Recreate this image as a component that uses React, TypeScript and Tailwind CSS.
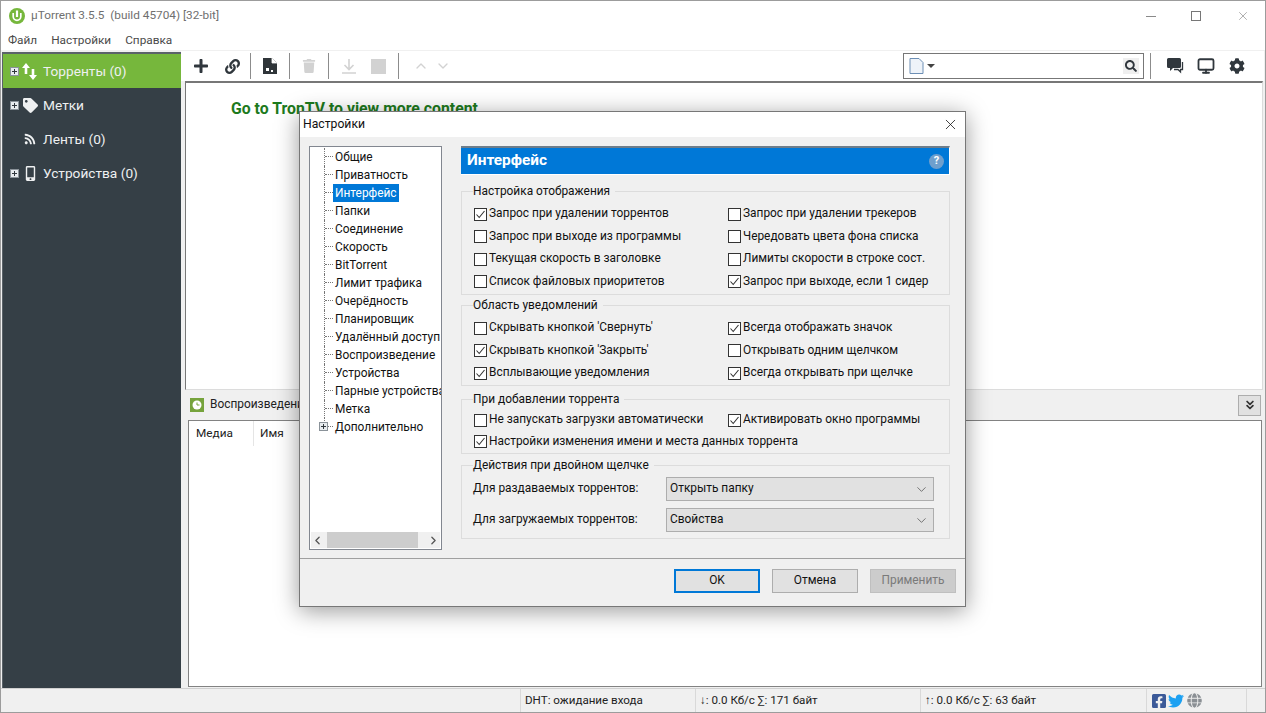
import { ChevronDown, ChevronLeft, ChevronRight, ChevronUp, ChevronsDown, Monitor, X } from "lucide-react";
import { FaCog, FaFacebookSquare, FaGlobe, FaLink, FaMobileAlt, FaPlus, FaRss, FaSearch, FaTag, FaTrash, FaTwitter } from "react-icons/fa";

const TREE = ["Общие", "Приватность", "Интерфейс", "Папки", "Соединение", "Скорость", "BitTorrent", "Лимит трафика", "Очерёдность", "Планировщик", "Удалённый доступ", "Воспроизведение", "Устройства", "Парные устройства", "Метка", "Дополнительно"];

const DISPLAY: [string, boolean][] = [
    ["Запрос при удалении торрентов", true],
    ["Запрос при удалении трекеров", false],
    ["Запрос при выходе из программы", false],
    ["Чередовать цвета фона списка", false],
    ["Текущая скорость в заголовке", false],
    ["Лимиты скорости в строке сост.", false],
    ["Список файловых приоритетов", false],
    ["Запрос при выходе, если 1 сидер", true],
];

const TRAY: [string, boolean][] = [
    ["Скрывать кнопкой 'Свернуть'", false],
    ["Всегда отображать значок", true],
    ["Скрывать кнопкой 'Закрыть'", true],
    ["Открывать одним щелчком", false],
    ["Всплывающие уведомления", true],
    ["Всегда открывать при щелчке", true],
];

const ADDING: [string, boolean][] = [
    ["Не запускать загрузки автоматически", false],
    ["Активировать окно программы", true],
];

function Logo() {
    return (
        <svg width="16" height="16" viewBox="0 0 16 16">
            <circle cx="8" cy="8" r="8" fill="#76b73c" />
            <path d="M4.2 5v3.5a3.8 3.8 0 0 0 7.6 0V5" fill="none" stroke="#fff" strokeWidth="1.7" />
            <path d="M8 2.5V9" fill="none" stroke="#fff" strokeWidth="2.2" />
        </svg>
    );
}

function FileIcon() {
    return (
        <svg width="15" height="16" viewBox="0 0 15 16">
            <path d="M0 0h9l5 5v11H0z" fill="#2f3539" />
            <path d="M9 0v5h5" fill="#fff" stroke="#fff" strokeWidth="0.8" />
            <rect x="3" y="10" width="3" height="3" fill="#fff" />
            <rect x="8" y="12" width="2" height="2" fill="#fff" />
        </svg>
    );
}

function ChatIcon() {
    return (
        <svg width="17" height="16" viewBox="0 0 17 16">
            <path d="M1.5 0h11A1.5 1.5 0 0 1 14 1.500v7A1.500 1.500 0 0 1 12.500 10H6l-3 3v-3H1.500A1.500 1.500 0 0 1 0 8.500v-7A1.500 1.500 0 0 1 1.500 0z" fill="#30373d" />
            <path d="M15.500 4v7.500h-2v2.500l-2.500-2.500H7" fill="none" stroke="#30373d" strokeWidth="1.300" />
        </svg>
    );
}

function TransferIcon() {
    return (
        <svg width="16" height="17" viewBox="0 0 16 17" fill="#fff">
            <path d="M4 0 8 5H5.300v6H2.700V5H0z" />
            <path d="M11 17 7 12h2.700V6h2.600v6H15z" />
        </svg>
    );
}

function Sep({ className = "" }: { className?: string }) {
    return <div className={`w-px h-[26px] bg-[#8c8c8c] ${className}`} />;
}

function Expander() {
    return (
        <span className="w-[9px] h-[9px] bg-[#e8ecef] border border-[#8a9299] flex items-center justify-center relative">
            <span className="absolute w-[5px] h-px bg-[#30373d]" />
            <span className="absolute w-px h-[5px] bg-[#30373d]" />
        </span>
    );
}

function SideRow({ label, icon, active, expand = true }: { label: string; icon: React.ReactNode; active?: boolean; expand?: boolean }) {
    return (
        <div className={`h-[34px] flex items-center pl-[7px] text-[13.7px] text-[#eef0f1] ${active ? "bg-[#76b73c]" : ""}`}>
            <span className="w-[9px] flex">{expand && <Expander />}</span>
            <span className="w-[24px] -ml-[1px] flex items-center justify-center">{icon}</span>
            <span className="ml-[1px]">{label}</span>
        </div>
    );
}

function Check({ label, checked, className = "" }: { label: string; checked: boolean; className?: string }) {
    return (
        <div className={`flex items-center h-[22.5px] ${className}`}>
            <span className="w-[13px] h-[13px] bg-white border border-[#333] flex items-center justify-center shrink-0">
                {checked && (
                    <svg width="11" height="11" viewBox="0 0 11 11">
                        <path d="M1.5 5.5 4.2 8.5 9.5 2" fill="none" stroke="#333" strokeWidth="1.1" />
                    </svg>
                )}
            </span>
            <span className="ml-[2px] whitespace-nowrap">{label}</span>
        </div>
    );
}

function Group({ title, className, children }: { title: string; className: string; children: React.ReactNode }) {
    return (
        <fieldset className={`border border-[#dcdcdc] pl-[12px] w-[489px] ${className}`}>
            <legend className="-ml-[1px] pr-[5px] leading-[14px]">{title}</legend>
            {children}
        </fieldset>
    );
}

function FakeSelect({ value }: { value: string }) {
    return (
        <div className="w-[268px] h-[24px] bg-[#e1e1e1] border border-[#adadad] flex items-center justify-between pl-[3px] pr-[4px]">
            <span>{value}</span>
            <ChevronDown size={15} strokeWidth={1} color="#333" />
        </div>
    );
}

function Dialog() {
    return (
        <div className="absolute left-[298px] top-[110px] w-[667px] h-[496px] bg-[#f0f0f0] border border-[#777] shadow-[0_4px_22px_rgba(0,0,0,0.4)] flex flex-col text-[11.9px] text-[#111]">
            <div className="h-[25px] bg-white flex items-center justify-between pl-[3px] pr-[6px] shrink-0">
                <span className="text-[12.2px]">Настройки</span>
                <X size={17} strokeWidth={1.1} color="#111" />
            </div>
            <div className="flex-1 flex pl-[9px] pt-[9px]">
                <div className="w-[133px] h-[404px] bg-white border border-[#828790] flex flex-col relative">
                    <div className="flex-1 pt-[1px] overflow-hidden pl-[14px]">
                        {TREE.map((item, i) => (
                            <div key={item} className="h-[18px] flex items-center relative whitespace-nowrap">
                                <div className={`w-[9px] h-[18px] shrink-0 ${i === TREE.length - 1 ? "" : "border-l border-dotted border-[#777]"}`}>
                                    <div className={`h-[9px] border-b border-dotted border-[#777] ${i === TREE.length - 1 ? "border-l" : ""}`} />
                                </div>
                                <span className={`px-[2px] h-[18px] leading-[18px] ${item === "Интерфейс" ? "bg-[#0078d7] text-white" : ""}`}>{item}</span>
                                {i === TREE.length - 1 && (
                                    <span className="absolute left-[-5px] top-[4px]">
                                        <Expander />
                                    </span>
                                )}
                            </div>
                        ))}
                    </div>
                    <div className="h-[16px] mx-[1px] mb-[1px] bg-[#f0f0f0] flex items-center justify-between shrink-0">
                        <ChevronLeft size={13} strokeWidth={2.4} color="#555" />
                        <div className="w-[91px] h-[16px] bg-[#cdcdcd] -ml-[1px] mr-[5px]" />
                        <ChevronRight size={13} strokeWidth={2.4} color="#555" />
                    </div>
                </div>
                <div className="ml-[19px] flex flex-col">
                    <div className="w-[489px] h-[29px] bg-[#0078d7] border-t-2 border-[#6e7d8a] border-r border-b border-r-white border-b-white flex items-center justify-between pl-[6px] pr-[5px] mb-[9px]">
                        <span className="text-white font-bold text-[15.400px]">Интерфейс</span>
                        <span className="w-[15px] h-[15px] rounded-full bg-[#6f9fcd] text-white text-[11px] font-bold flex items-center justify-center">?</span>
                    </div>
                    <Group title="Настройка отображения" className="h-[111px] mb-[3px]">
                        <div className="grid grid-cols-[254px_1fr] pt-[5px]">
                            {DISPLAY.map(([label, on]) => (
                                <Check key={label} label={label} checked={on} />
                            ))}
                        </div>
                    </Group>
                    <Group title="Область уведомлений" className="h-[88px] mb-[6px]">
                        <div className="grid grid-cols-[254px_1fr] pt-[5px]">
                            {TRAY.map(([label, on]) => (
                                <Check key={label} label={label} checked={on} />
                            ))}
                        </div>
                    </Group>
                    <Group title="При добавлении торрента" className="h-[62px] mb-[4px]">
                        <div className="grid grid-cols-[254px_1fr] pt-[3px]">
                            {ADDING.map(([label, on]) => (
                                <Check key={label} label={label} checked={on} />
                            ))}
                            <Check className="col-span-2 -mt-[1px]" label="Настройки изменения имени и места данных торрента" checked={true} />
                        </div>
                    </Group>
                    <Group title="Действия при двойном щелчке" className="h-[81px]">
                        <div className="flex items-center justify-between pr-[15px] pt-[5px]">
                            <span className="-ml-[1px]">Для раздаваемых торрентов:</span>
                            <FakeSelect value="Открыть папку" />
                        </div>
                        <div className="flex items-center justify-between pr-[15px] pt-[7px]">
                            <span className="-ml-[1px]">Для загружаемых торрентов:</span>
                            <FakeSelect value="Свойства" />
                        </div>
                    </Group>
                </div>
            </div>
            <div className="h-px bg-[#a0a0a0] shrink-0" />
            <div className="h-[47px] flex justify-end items-start gap-[12px] pt-[10px] pr-[9px] shrink-0">
                <button className="w-[86px] h-[24px] bg-[#e1e1e1] border-2 border-[#0078d7]">OK</button>
                <button className="w-[86px] h-[24px] bg-[#e1e1e1] border border-[#adadad]">Отмена</button>
                <button className="w-[86px] h-[24px] bg-[#cccccc] border border-[#bfbfbf] text-[#7a7a7a]">Применить</button>
            </div>
        </div>
    );
}

export default function App() {
    return (
        <div className="relative w-[1266px] h-[713px] bg-white border border-[#9c9c9c] overflow-hidden flex flex-col font-['Roboto','Noto_Sans',sans-serif] text-[11.8px] text-[#222]">
            {/* Title + menu */}
            <div className="h-[30px] flex items-center pl-[8px] shrink-0 text-[#6f6f6f]">
                <Logo />
                <span className="ml-[6px] whitespace-pre">µTorrent 3.5.5  (build 45704) [32-bit]</span>
                <div className="ml-auto flex items-center text-[#777]">
                    <div className="w-[10px] h-px bg-[#8a8a8a] mr-[35px]" />
                    <div className="w-[10px] h-[10px] border border-[#777] mr-[35px]" />
                    <X size={14} strokeWidth={1} className="mr-[15px]" />
                </div>
            </div>
            <div className="h-[19px] flex items-center gap-[14px] pl-[7px] shrink-0 text-[#4a4a4a]">
                <span>Файл</span>
                <span>Настройки</span>
                <span>Справка</span>
            </div>
            <div className="flex-1 flex bg-[#f0f0f0] pt-[2px] pl-[1px] pr-[1px] min-h-0">
                {/* Sidebar */}
                <div className="w-[179px] bg-[#353f46] border-t-2 border-l border-[#5a6268] shrink-0 h-[636px]">
                    <SideRow active label="Торренты (0)" icon={<TransferIcon />} />
                    <SideRow label="Метки" icon={<FaTag size={15} />} />
                    <SideRow expand={false} label="Ленты (0)" icon={<FaRss size={12} />} />
                    <SideRow label="Устройства (0)" icon={<FaMobileAlt size={15} />} />
                </div>
                <div className="flex-1 flex flex-col min-w-0 pl-[4px]">
                    {/* Toolbar */}
                    <div className="h-[30px] bg-white flex items-center -ml-[4px] shrink-0 -mt-[1px] pl-[3px]">
                        <div className="w-[25px] ml-[4px] flex justify-center"><FaPlus size={16} color="#30373d" /></div>
                        <div className="w-[31px] ml-[4px] flex justify-center"><FaLink size={15} color="#30373d" /></div>
                        <Sep className="ml-[2px]" />
                        <div className="w-[38px] flex justify-center"><FileIcon /></div>
                        <Sep />
                        <div className="w-[38px] flex justify-center"><FaTrash size={14} color="#d2d2d2" /></div>
                        <Sep />
                        <div className="w-[40px] flex justify-center">
                            <svg width="16" height="16" viewBox="0 0 16 16" fill="none" stroke="#d2d2d2" strokeWidth="1.6">
                                <path d="M8 1v10M3.5 7 8 11.5 12.5 7M1 15h14" />
                            </svg>
                        </div>
                        <div className="w-[15px] h-[15px] bg-[#d2d2d2] ml-[2px]" />
                        <div className="w-[12px]" />
                        <Sep />
                        <ChevronUp size={16} strokeWidth={2} color="#d2d2d2" className="ml-[14px]" />
                        <ChevronDown size={16} strokeWidth={2} color="#d2d2d2" className="ml-[6px]" />
                        <div className="ml-auto w-[241px] h-[26px] border border-[#777] flex items-center pl-[5px] pr-[4px]">
                            <svg width="15" height="16" viewBox="0 0 15 16">
                                <path d="M1 .5h9l4 4v11H1z" fill="#eef3f9" stroke="#6d8fb5" />
                            </svg>
                            <span className="w-0 h-0 border-x-[4px] border-x-transparent border-t-[4px] border-t-[#444] ml-[3px]" />
                            <span className="ml-auto w-[16px] h-[16px] bg-[#efefef] flex items-center justify-center"><FaSearch size={12} color="#30373d" /></span>
                        </div>
                        <Sep className="ml-[6px]" />
                        <div className="w-[30px] ml-[9px] flex justify-center"><ChatIcon /></div>
                        <div className="w-[32px] flex justify-center"><Monitor size={18} strokeWidth={2.4} color="#30373d" /></div>
                        <div className="w-[30px] mr-[12px] flex justify-center"><FaCog size={16} color="#30373d" /></div>
                    </div>
                    {/* Top pane */}
                    <div className="h-[309px] bg-white border-t-2 border-l border-[#777] border-r border-r-[#dcdcdc] border-b border-b-[#dcdcdc] shrink-0 pl-[45px] pt-[14px] mr-[1px]">
                        <span className="text-[#1d7a1d] font-bold text-[15.800px]">Go to TronTV to view more content</span>
                    </div>
                    {/* Bottom tabs */}
                    <div className="h-[30px] flex items-center pl-[5px] pr-[3px] shrink-0">
                        <svg width="14" height="14" viewBox="0 0 14 14">
                            <rect width="14" height="14" fill="#76a33c" />
                            <circle cx="7" cy="7" r="4.5" fill="#fff" />
                            <path d="M7 4.5V7h2.5" stroke="#76a33c" fill="none" />
                        </svg>
                        <span className="ml-[6px] text-[11.900px]">Воспроизведение</span>
                        <span className="ml-auto w-[23px] h-[21px] bg-[#e1e1e1] border border-[#adadad] flex items-center justify-center">
                            <ChevronsDown size={14} strokeWidth={3} color="#333" />
                        </span>
                    </div>
                    <div className="h-[267px] ml-[3px] mr-[2px] bg-white border border-[#828282] shrink-0">
                        <div className="flex h-[25px] items-center">
                            <span className="w-[65px] pl-[7px] border-r border-[#e5e5e5] h-full flex items-center">Медиа</span>
                            <span className="pl-[6px]">Имя</span>
                        </div>
                    </div>
                </div>
            </div>
            {/* Status bar */}
            <div className="absolute left-0 right-0 bottom-0 h-[24px] bg-[#f0f0f0] border-t border-[#d0d0d0] flex items-center text-[11.600px] text-[#222]">
                <div className="w-[519px]" />
                <div className="w-[175px] h-full border-l border-[#d9d9d9] pl-[4px] flex items-center">DHT: ожидание входа</div>
                <div className="w-[225px] h-full border-l border-[#d9d9d9] pl-[4px] flex items-center">↓: 0.0 Кб/с ∑: 171 байт</div>
                <div className="w-[226px] h-full border-l border-[#d9d9d9] pl-[4px] flex items-center">↑: 0.0 Кб/с ∑: 63 байт</div>
                <div className="w-[101px] h-full border-l border-r border-[#d9d9d9] pl-[4px] flex items-center gap-[1px]">
                    <FaFacebookSquare size={16} color="#3b5998" />
                    <FaTwitter size={16} color="#1da1f2" />
                    <FaGlobe size={15} color="#8a8f94" className="ml-[2px]" />
                </div>
            </div>
            <Dialog />
        </div>
    );
}
